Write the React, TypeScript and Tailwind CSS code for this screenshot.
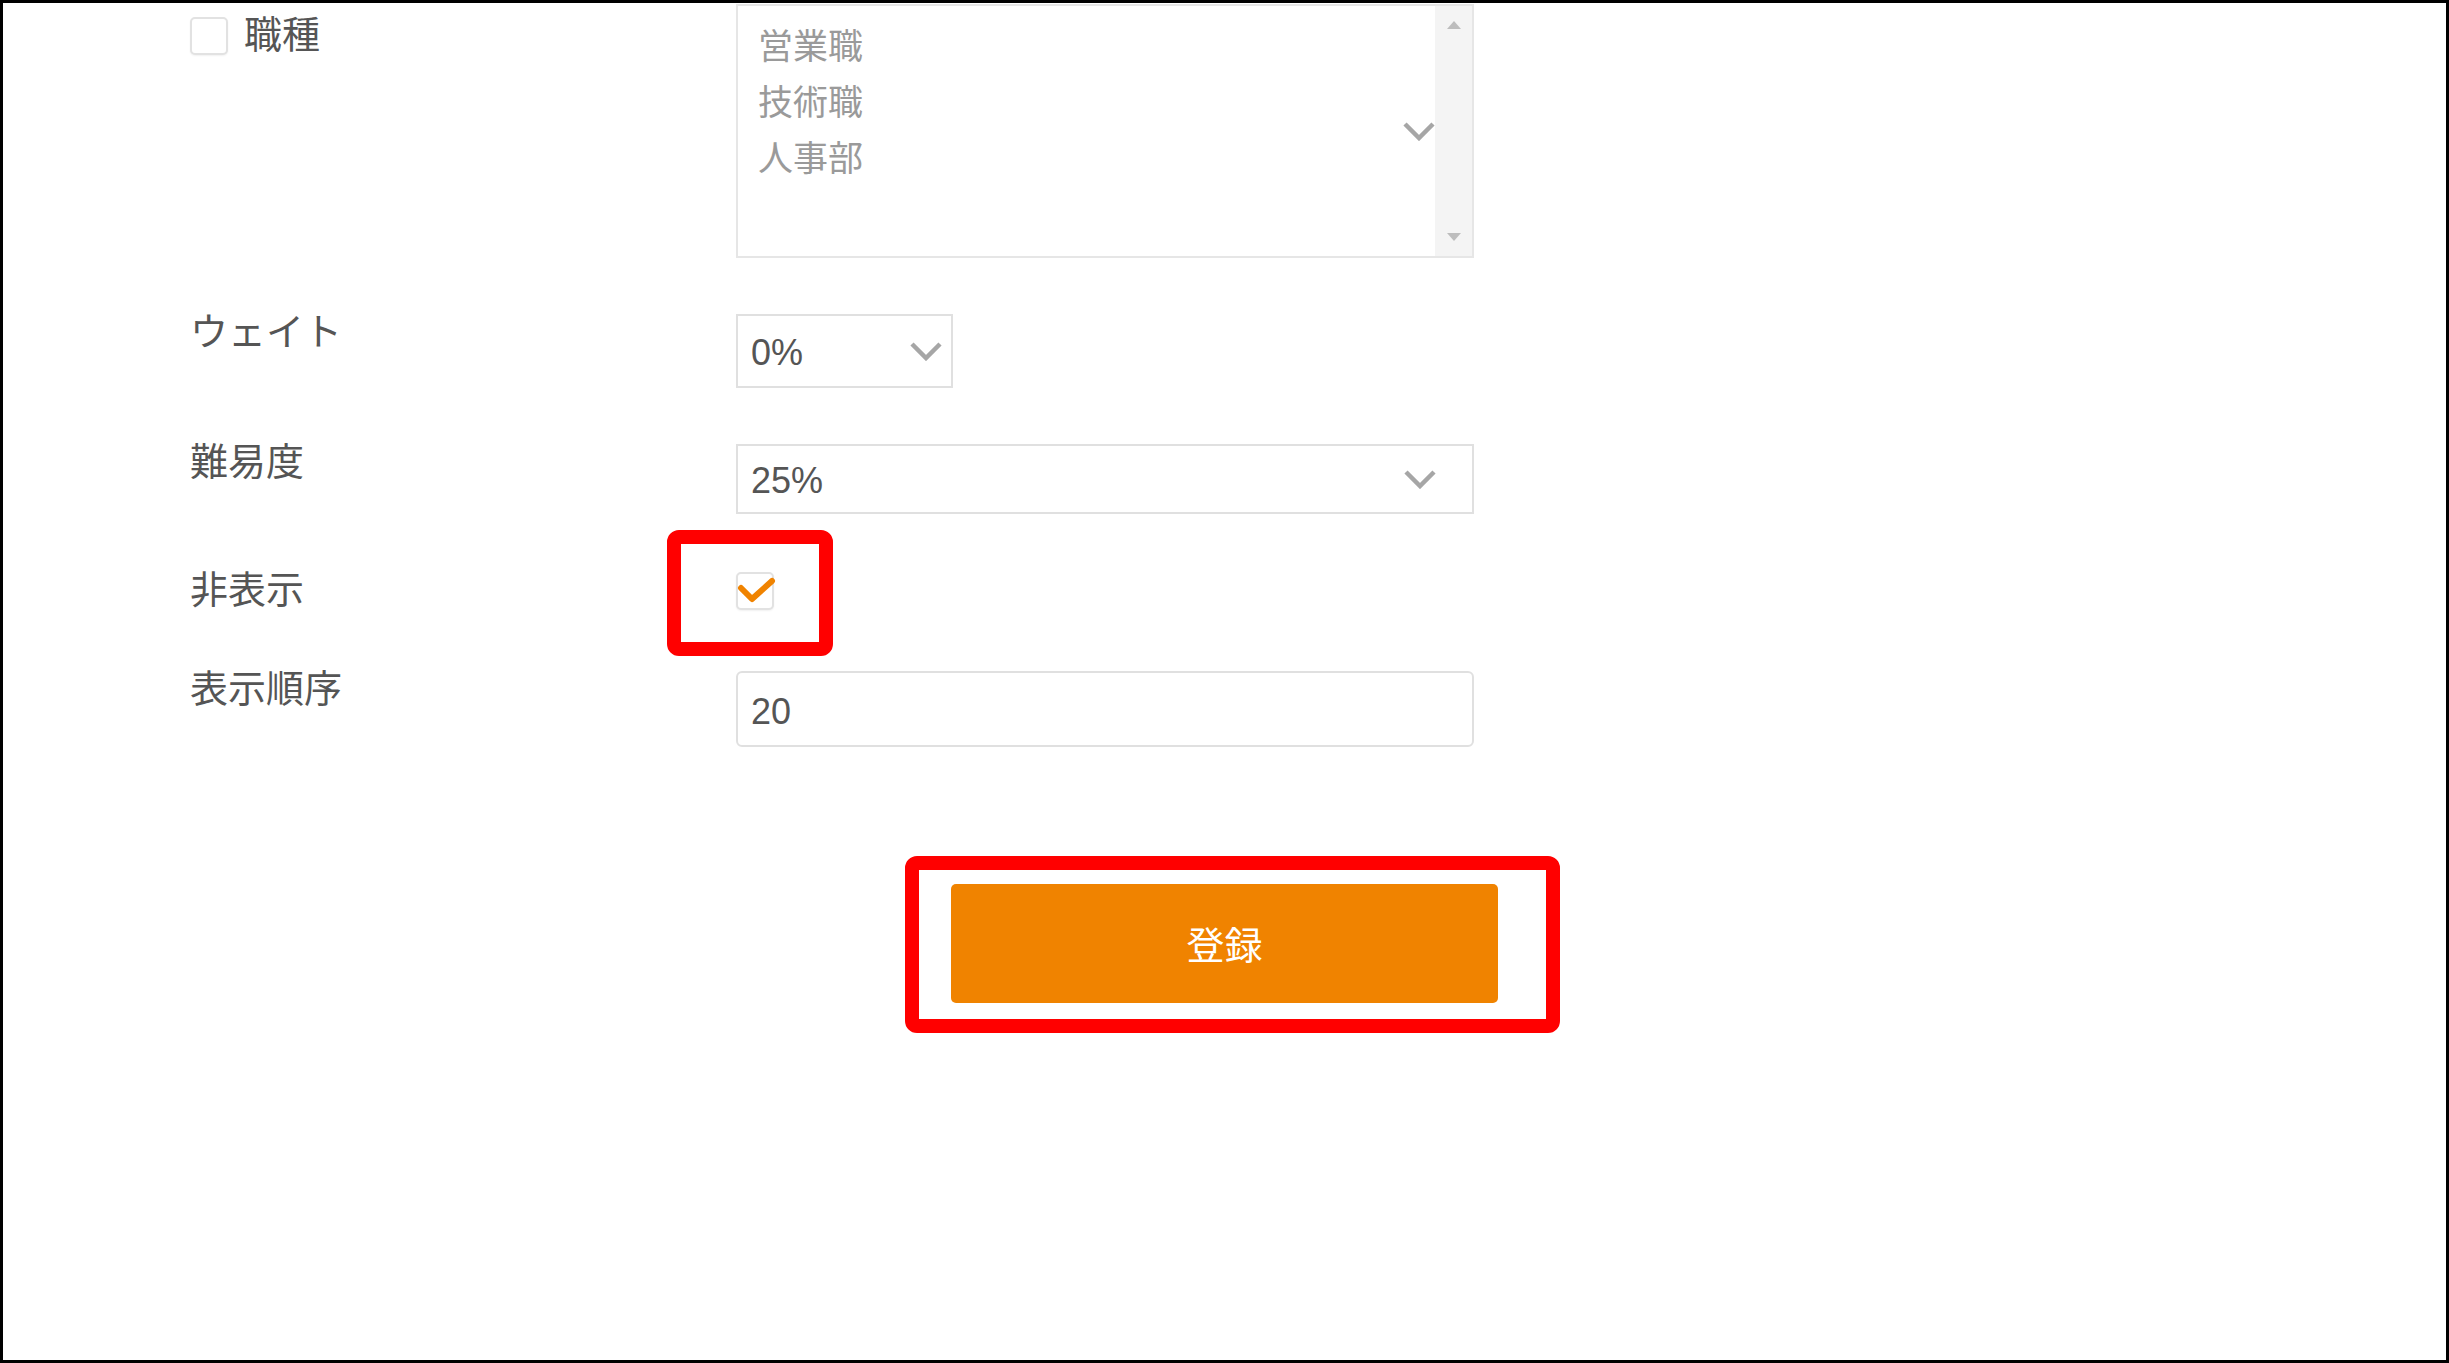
import React from "react"

const Chevron = () => (
  <svg className="w-[32px] h-[20px] shrink-0" viewBox="0 0 32 20" fill="none">
    <polyline points="2,3 16,17 30,3" stroke="#a6a6a6" strokeWidth="4.5" />
  </svg>
)

function Checkbox({ checked }: { checked?: boolean }) {
  return (
    <div className="relative w-[38px] h-[38px] shrink-0 rounded-[5px] border-2 border-[#e2e2e2] bg-white shadow-[0_1px_2px_rgba(0,0,0,0.06)]">
      {checked && (
        <svg className="absolute -left-[2px] -top-[2px] w-[38px] h-[38px] overflow-visible" viewBox="0 0 38 38" fill="none">
          <polyline points="5,16 16,27 36,9" stroke="#f08300" strokeWidth="6" strokeLinecap="round" strokeLinejoin="round" />
        </svg>
      )}
    </div>
  )
}

function Label({ children }: { children: React.ReactNode }) {
  return <div className="w-[546px] shrink-0 text-[38px] leading-[36px] text-[#555]">{children}</div>
}

export default function App() {
  const jobs = ["営業職", "技術職", "人事部"]

  return (
    <div className="h-[1363px] w-full overflow-hidden border-[3px] border-black bg-white font-['Liberation_Sans','Noto_Sans_CJK_JP',sans-serif] text-[#555]">
      <div className="pl-[187px] pt-[1px]">
        {/* 職種 */}
        <div className="flex items-start">
          <div className="w-[546px] shrink-0 flex items-center gap-[16px] pt-[13px]">
            <Checkbox />
            <span className="text-[38px] leading-[38px] -mt-[2px]">職種</span>
          </div>
          <div className="flex w-[738px] h-[254px] border-2 border-[#e6e6e6] bg-white">
            <div className="flex flex-1">
              <div className="flex-1 pl-[20px] pt-[13px] text-[35px] leading-[56px] text-[#9a9a9a]">
                {jobs.map((j) => (
                  <div key={j}>{j}</div>
                ))}
              </div>
              <div className="self-center">
                <Chevron />
              </div>
            </div>
            <div className="w-[37px] bg-[#f4f4f4] flex flex-col items-center justify-between py-[15px]">
              <div className="w-0 h-0 border-x-[7px] border-x-transparent border-b-[8px] border-b-[#bdbdbd]" />
              <div className="w-0 h-0 border-x-[7px] border-x-transparent border-t-[8px] border-t-[#bdbdbd]" />
            </div>
          </div>
        </div>

        {/* ウェイト */}
        <div className="flex items-start mt-[56px]">
          <Label>ウェイト</Label>
          <div className="flex items-center justify-between w-[217px] h-[74px] border-2 border-[#e0e0e0] pl-[13px] pr-[9px]">
            <span className="text-[36px] text-[#555] pt-[4px]">0%</span>
            <Chevron />
          </div>
        </div>

        {/* 難易度 */}
        <div className="flex items-start mt-[56px]">
          <Label>難易度</Label>
          <div className="flex items-center justify-between w-[738px] h-[70px] border-2 border-[#e0e0e0] pl-[13px] pr-[36px]">
            <span className="text-[36px] text-[#555] pt-[4px]">25%</span>
            <Chevron />
          </div>
        </div>

        {/* 非表示 */}
        <div className="flex items-start mt-[58px]">
          <Label>非表示</Label>
          <div className="relative">
            <Checkbox checked />
            <div className="absolute -left-[69px] -top-[42px] w-[166px] h-[126px] rounded-[12px] border-[14px] border-[#ff0000]" />
          </div>
        </div>

        {/* 表示順序 */}
        <div className="flex items-start mt-[61px]">
          <Label>表示順序</Label>
          <input
            readOnly
            value="20"
            className="w-[738px] h-[76px] rounded-[6px] border-2 border-[#e0e0e0] pl-[13px] pt-[6px] text-[36px] text-[#555] outline-none"
          />
        </div>
      </div>

      {/* 登録 */}
      <div className="flex justify-center mt-[137px]">
        <div className="relative">
          <button className="w-[547px] h-[119px] rounded-[5px] bg-[#f08300] pt-[5px] text-white text-[38px]">登録</button>
          <div className="absolute -left-[46px] -top-[28px] w-[655px] h-[177px] rounded-[12px] border-[14px] border-[#ff0000]" />
        </div>
      </div>
    </div>
  )
}
